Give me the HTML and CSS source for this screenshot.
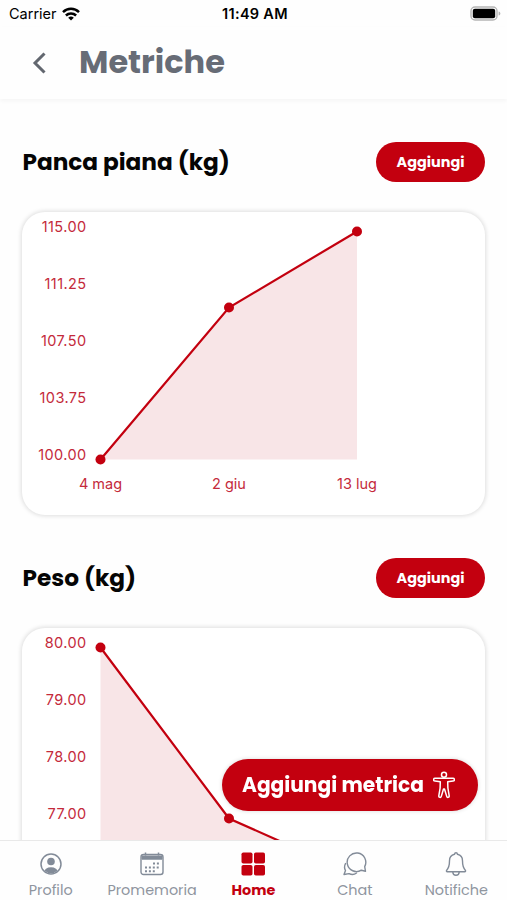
FILE: index.html
```
<!DOCTYPE html>
<html lang="it">
<head>
    <meta charset="UTF-8">
    <meta name="viewport" content="width=device-width, initial-scale=1.0">
    <title>Metriche</title>
    <link rel="stylesheet" href="styles.css">
</head>
<body>
    <div class="status-bar">
        <div class="carrier">
            <span>Carrier</span>
            <svg width="18" height="14" viewBox="0 0 18 14" fill="none" stroke="#000" stroke-width="2.5">
                <path d="M1 5.1a11.5 11.5 0 0 1 16 0"/>
                <path d="M3.9 8.5a7.3 7.3 0 0 1 10.2 0"/>
                <path d="M9 13.6 6.2 10.8a4 4 0 0 1 5.6 0z" fill="#000" stroke="none"/>
            </svg>
        </div>
        <span class="time">11:49 AM</span>
        <svg class="battery" width="31" height="16" viewBox="0 0 31 16">
            <rect x="1" y="1" width="26" height="13" rx="4" fill="#fff" stroke="#b5b5b5" stroke-width="1.4"/>
            <rect x="2.8" y="2.8" width="22.4" height="9.4" rx="2" fill="#000"/>
            <path d="M28.6 5.5c2.4.8 2.4 3.2 0 4z" fill="#b5b5b5"/>
        </svg>
    </div>

    <header class="header">
        <svg class="back" width="14" height="22" viewBox="0 0 14 22" fill="none" stroke="#62676f" stroke-width="3">
            <path d="M12.500 1.500 3 11l9.500 9.500"/>
        </svg>
        <h1>Metriche</h1>
    </header>

    <main class="content">
        <section class="metric">
            <div class="metric-header">
                <h2>Panca piana (kg)</h2>
                <button class="add-button">Aggiungi</button>
            </div>
            <div class="card">
                <svg class="chart" viewBox="0 0 462 303">
                    <polygon class="area" points="78,247.500 206.500,95.500 334.500,19.500 334.500,247.500"/>
                    <polyline class="line" points="78,247.500 206.500,95.500 334.500,19.500"/>
                    <circle cx="78" cy="247.500" r="5"/>
                    <circle cx="206.500" cy="95.500" r="5"/>
                    <circle cx="334.500" cy="19.500" r="5"/>
                    <g class="y-labels">
                        <text x="64" y="20">115.00</text>
                        <text x="64" y="77">111.25</text>
                        <text x="64" y="134">107.50</text>
                        <text x="64" y="191">103.75</text>
                        <text x="64" y="248">100.00</text>
                    </g>
                    <g class="x-labels">
                        <text x="78" y="277">4 mag</text>
                        <text x="206.500" y="277">2 giu</text>
                        <text x="334.500" y="277">13 lug</text>
                    </g>
                </svg>
            </div>
        </section>

        <section class="metric">
            <div class="metric-header">
                <h2>Peso (kg)</h2>
                <button class="add-button">Aggiungi</button>
            </div>
            <div class="card">
                <svg class="chart" viewBox="0 0 462 303">
                    <polygon class="area" points="78,19.500 206.500,190.500 334.500,247.500 78,247.500"/>
                    <polyline class="line" points="78,19.500 206.500,190.500 334.500,247.500"/>
                    <circle cx="78" cy="19.500" r="5"/>
                    <circle cx="206.500" cy="190.500" r="5"/>
                    <g class="y-labels">
                        <text x="64" y="20">80.00</text>
                        <text x="64" y="77">79.00</text>
                        <text x="64" y="134">78.00</text>
                        <text x="64" y="191">77.00</text>
                    </g>
                </svg>
            </div>
        </section>
    </main>

    <button class="fab">
        <span>Aggiungi metrica</span>
        <svg width="22" height="28" viewBox="0 0 22 28" fill="none" stroke="#fff" stroke-width="1.5" stroke-linejoin="round">
            <circle cx="11" cy="3.700" r="2.500"/>
            <path d="M2 7.300h18a1.300 1.300 0 0 1 0 2.800l-5.300.6.2 6.300 1.300 7.800c.2 1.700-2 2.200-2.500.6L11.500 18h-1l-2.200 7.400c-.5 1.600-2.700 1.100-2.500-.6L7.100 17l.2-6.300-5.300-.6a1.300 1.300 0 0 1 0-2.800z"/>
        </svg>
    </button>

    <nav class="tab-bar">
        <div class="tab">
            <svg width="24" height="24" viewBox="0 0 24 24">
                <defs><clipPath id="avatar"><circle cx="12" cy="12" r="9.300"/></clipPath></defs>
                <circle cx="12" cy="12" r="10" fill="none" stroke="#828b98" stroke-width="1.500"/>
                <circle cx="12" cy="9.500" r="3.800" fill="#828b98"/>
                <ellipse cx="12" cy="20" rx="7" ry="4.700" fill="#828b98" clip-path="url(#avatar)"/>
            </svg>
            <span>Profilo</span>
        </div>
        <div class="tab">
            <svg width="24" height="24" viewBox="0 0 24 24" fill="none" stroke="#828b98">
                <rect x="1" y="2.500" width="22" height="20" rx="2.500" stroke-width="1.400"/>
                <path d="M2 4h20v3.200H2z" fill="#828b98" stroke-width="1"/>
                <path d="M5.500.500v3M18.500.500v3" stroke-width="1.500"/>
                <path d="M13 11.500h7M5 15.500h15M5 19.300h11" stroke-width="2" stroke-dasharray="2 1.900"/>
            </svg>
            <span>Promemoria</span>
        </div>
        <div class="tab active">
            <svg width="24" height="24" viewBox="0 0 24 24" fill="#c3000f">
                <rect x="0.500" y="0.500" width="11" height="11" rx="1.800"/>
                <rect x="13" y="0.500" width="11" height="11" rx="1.800"/>
                <rect x="0.500" y="13" width="11" height="10.500" rx="1.800"/>
                <rect x="13" y="13" width="11" height="10.500" rx="1.800"/>
            </svg>
            <span>Home</span>
        </div>
        <div class="tab">
            <svg width="24" height="24" viewBox="0 0 24 24" fill="none" stroke="#828b98" stroke-width="1.400" stroke-linecap="round" stroke-linejoin="round">
                <path d="M22.500 19.300 18.300 18.200A9.300 9.300 0 1 1 21.700 14.600z"/>
                <path d="M2.500 11.500c-1.300 2.500-1.200 5 0 7L1 22.500l5-.9c2.600 1.300 5.500 1 7.500-.6"/>
            </svg>
            <span>Chat</span>
        </div>
        <div class="tab">
            <svg width="24" height="24" viewBox="0 0 24 24" fill="none" stroke="#828b98" stroke-width="1.400" stroke-linecap="round" stroke-linejoin="round">
                <path d="M12 .8c-.8 0-1.400.7-1.500 1.500C7.200 3 5.500 5.400 5.500 8.800c0 6-1.300 7.800-2.800 9.400-.6.800-.3 1.600.7 1.600h17.200c1 0 1.300-.8.7-1.600-1.500-1.600-2.800-3.400-2.800-9.400 0-3.400-1.700-5.800-5-6.500C13.400 1.500 12.800.8 12 .8z"/>
                <path d="M8.800 20c.2 4.300 6.200 4.300 6.400 0"/>
            </svg>
            <span>Notifiche</span>
        </div>
    </nav>
</body>
</html>
```

FILE: styles.css
```
* {
    box-sizing: border-box;
}
body {
    margin: 0;
    height: 900px;
    overflow: hidden;
    display: flex;
    flex-direction: column;
    background: #fefefe;
    font-family: 'Poppins', 'Inter', sans-serif;
}
h1, h2 {
    margin: 0;
}
button {
    border: none;
    background: #c3000f;
    color: #fff;
    font-family: inherit;
    font-weight: 700;
    white-space: nowrap;
}
.status-bar {
    flex: none;
    height: 27px;
    padding: 0 6px 0 9px;
    display: grid;
    grid-template-columns: 1fr auto 1fr;
    align-items: center;
    font-family: 'Inter', sans-serif;
    font-size: 14.500px;
}
.carrier {
    display: flex;
    align-items: center;
    gap: 5px;
}
.time {
    font-weight: 600;
    letter-spacing: 0.3px;
}
.battery {
    justify-self: end;
}
.header {
    flex: none;
    height: 72px;
    padding: 0 32px;
    display: flex;
    align-items: center;
    gap: 33px;
    box-shadow: 0 2px 4px rgba(0, 0, 0, 0.04);
}
.header h1 {
    color: #676c76;
    font-size: 32px;
    line-height: 40px;
    font-weight: 700;
    padding-bottom: 2px;
}
.content {
    flex: 1;
    min-height: 0;
    overflow: hidden;
    padding: 43px 22px 0;
}
.metric {
    margin-bottom: 43px;
}
.metric-header {
    height: 40px;
    display: flex;
    align-items: center;
    justify-content: space-between;
    margin-bottom: 30px;
}
.metric-header h2 {
    font-size: 23.200px;
    line-height: 34px;
    font-weight: 700;
    color: #050505;
    padding: 0 0 1px 0.500px;
}
.add-button {
    width: 109px;
    height: 40px;
    padding: 0;
    border-radius: 20px;
    font-size: 14.400px;
}
.card {
    height: 303px;
    border-radius: 23px;
    box-shadow: 0 0 4px 1px rgba(0, 0, 0, 0.13);
    background: #fff;
}
.chart {
    display: block;
    width: 100%;
    height: 303px;
}
.chart text {
    fill: #c42a3b;
    font-family: 'Inter', sans-serif;
    font-size: 14.500px;
}
.chart circle {
    fill: #c3000f;
}
.area {
    fill: #f8e5e7;
}
.line {
    fill: none;
    stroke: #c3000f;
    stroke-width: 2.200;
}
.y-labels {
    text-anchor: end;
    letter-spacing: 0.4px;
}
.x-labels {
    text-anchor: middle;
}
.fab {
    position: fixed;
    left: 222px;
    top: 759px;
    width: 256px;
    height: 52px;
    padding: 0 23px 0 20px;
    border-radius: 26px;
    display: flex;
    align-items: center;
    justify-content: space-between;
    font-size: 20.200px;
    box-shadow: 0 0 4px rgba(0, 0, 0, 0.15);
}
.tab-bar {
    flex: none;
    height: 60px;
    display: grid;
    grid-template-columns: repeat(5, 1fr);
    background: #fefefe;
    border-top: 1px solid #e9e9e9;
}
.tab {
    display: flex;
    flex-direction: column;
    align-items: center;
    padding-top: 11px;
    color: #8f959e;
    font-size: 14.400px;
    line-height: 18px;
}
.tab svg {
    margin-bottom: 5px;
}
.tab.active {
    color: #c3000f;
    font-weight: 700;
}
```
